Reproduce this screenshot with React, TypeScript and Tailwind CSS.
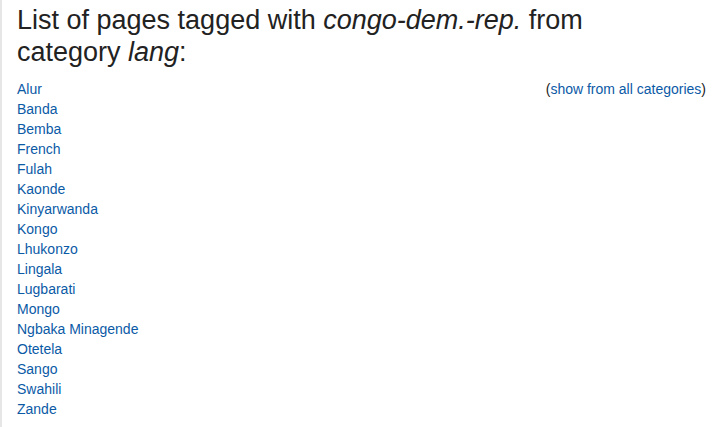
const pages = [
  "Alur",
  "Banda",
  "Bemba",
  "French",
  "Fulah",
  "Kaonde",
  "Kinyarwanda",
  "Kongo",
  "Lhukonzo",
  "Lingala",
  "Lugbarati",
  "Mongo",
  "Ngbaka Minagende",
  "Otetela",
  "Sango",
  "Swahili",
  "Zande",
];

export default function App() {
  return (
    <div className="min-h-[427px] bg-white border-l-2 border-[#e6e6e6] pl-[15px] pr-[10px] pt-[4px] font-['Liberation_Sans',Arial,sans-serif] text-[#222]">
      <h1 className="max-w-[660px] text-[27px] leading-[32px] font-normal mb-[11px]">
        List of pages tagged with <i>congo-dem.-rep.</i> from category <i>lang</i>:
      </h1>
      <div className="flex justify-between text-[14px] leading-[20px]">
        <ul>
          {pages.map((p) => (
            <li key={p}>
              <a href="#" className="text-[#0b5aa6]">
                {p}
              </a>
            </li>
          ))}
        </ul>
        <div className="text-[#222]">
          (<a href="#" className="text-[#0b5aa6]">show from all categories</a>)
        </div>
      </div>
    </div>
  );
}
